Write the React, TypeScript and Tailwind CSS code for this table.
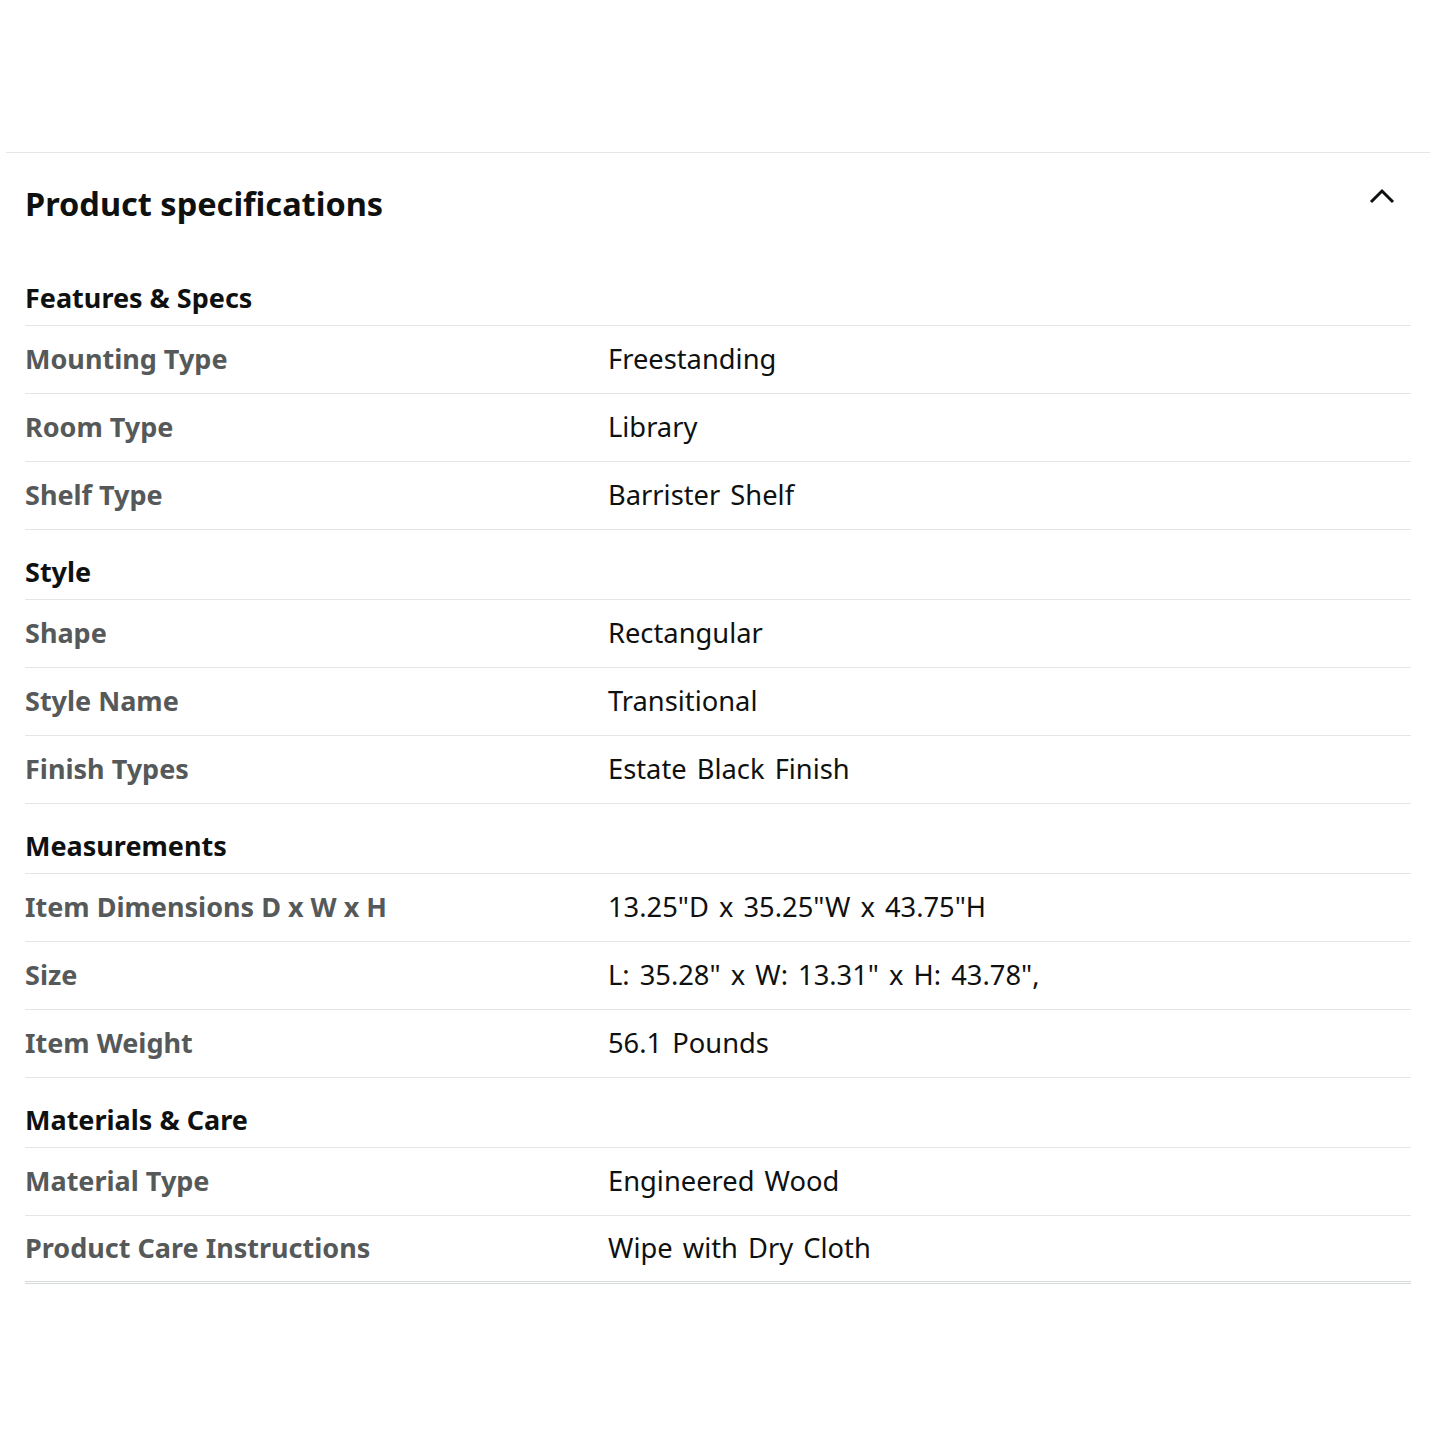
import React from "react";

type Row = [string, string];
const sections: { title: string; rows: Row[] }[] = [
  {
    title: "Features & Specs",
    rows: [
      ["Mounting Type", "Freestanding"],
      ["Room Type", "Library"],
      ["Shelf Type", "Barrister Shelf"],
    ],
  },
  {
    title: "Style",
    rows: [
      ["Shape", "Rectangular"],
      ["Style Name", "Transitional"],
      ["Finish Types", "Estate Black Finish"],
    ],
  },
  {
    title: "Measurements",
    rows: [
      ["Item Dimensions D x W x H", '13.25"D x 35.25"W x 43.75"H'],
      ["Size", 'L: 35.28" x W: 13.31" x H: 43.78",'],
      ["Item Weight", "56.1 Pounds"],
    ],
  },
  {
    title: "Materials & Care",
    rows: [
      ["Material Type", "Engineered Wood"],
      ["Product Care Instructions", "Wipe with Dry Cloth"],
    ],
  },
];

export default function App() {
  return (
    <div
      className="w-[1440px] h-[1440px] bg-white text-[#0f1111]"
      style={{ fontFamily: '"Noto Sans", "Open Sans", sans-serif' }}
    >
      <div className="pt-[152px] px-[6px]">
        <div className="border-t border-[#e3e6e6] w-[1424px]" />
      </div>
      <div className="px-[25px] w-[1436px]">
        <div className="flex items-center justify-between h-[102px] pr-[16px]">
          <h2 className="text-[32.5px] font-bold leading-none">Product specifications</h2>
          <svg width="26" height="16" viewBox="0 0 26 16" className="mb-[16px]">
            <path d="M2 14 L13 3 L24 14" fill="none" stroke="#0f1111" strokeWidth="3" />
          </svg>
        </div>
        {sections.map((s, i) => (
          <div key={s.title}>
            <div
              className={`flex items-end border-b border-[#e3e6e6] pb-[14px] ${
                i === 0 ? "h-[71px]" : "h-[70px]"
              }`}
            >
              <h3 className="text-[27px] font-bold leading-none">{s.title}</h3>
            </div>
            {s.rows.map(([k, v], j) => (
              <div
                key={k}
                className={`grid grid-cols-[583px_1fr] items-center h-[68px] border-b ${
                  i === sections.length - 1 && j === s.rows.length - 1
                    ? "border-b-[3px] border-double border-[#d5d9d9]"
                    : "border-[#e3e6e6]"
                }`}
              >
                <div className="text-[27px] font-bold text-[#565959]">{k}</div>
                <div className="text-[27.3px] [word-spacing:3px]">{v}</div>
              </div>
            ))}
          </div>
        ))}
      </div>
    </div>
  );
}
